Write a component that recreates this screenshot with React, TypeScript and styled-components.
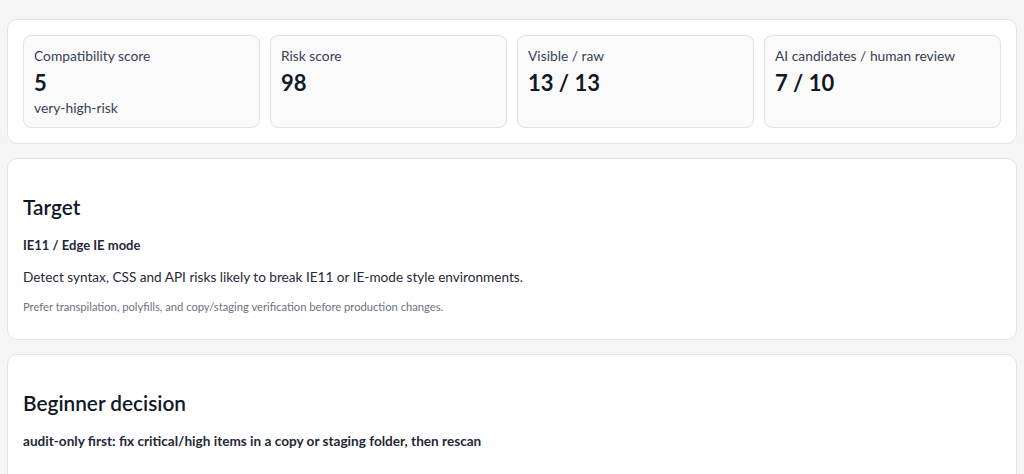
import React from 'react';
import styled, { createGlobalStyle } from 'styled-components';

const GlobalStyle = createGlobalStyle`
  html, body {
    margin: 0;
    padding: 0;
    background: #f5f5f5;
    font-family: Lato, "Noto Sans", sans-serif;
    color: #1f2937;
  }
`;

const Page = styled.div`
  display: flex;
  flex-direction: column;
  gap: 14px;
  padding: 19px 7px 0 7px;
`;

const Card = styled.section`
  background: #ffffff;
  border: 1px solid #e3e3e3;
  border-radius: 10px;
  padding: 15px;
`;

const StatGrid = styled.div`
  display: grid;
  grid-template-columns: repeat(4, 1fr);
  gap: 10px;
`;

const StatBox = styled.div`
  background: #fafafa;
  border: 1px solid #e2e2e2;
  border-radius: 8px;
  padding: 11px 10px 10px;
  display: flex;
  flex-direction: column;
`;

const StatLabel = styled.div`
  font-size: 13.8px;
  line-height: 18px;
  color: #374151;
`;

const StatValue = styled.div`
  margin-top: 4px;
  font-size: 22px;
  line-height: 28px;
  font-weight: 700;
  color: #111827;
`;

const StatSub = styled.div`
  margin-top: 2px;
  font-size: 13.8px;
  line-height: 18px;
  color: #374151;
`;

const Heading = styled.h2`
  margin: 19px 0 0;
  font-size: 20.8px;
  line-height: 28px;
  font-weight: 600;
  color: #111827;
`;

const Strong = styled.div<{ $size?: number }>`
  margin-top: 14px;
  font-size: ${({ $size }) => $size ?? 13}px;
  line-height: 20px;
  font-weight: 700;
  color: #1f2937;
`;

const Text = styled.p`
  margin: 12px 0 0;
  font-size: 13.6px;
  line-height: 20px;
  color: #1f2937;
`;

const Note = styled.p`
  margin: 12px 0 9px;
  font-size: 11.2px;
  line-height: 16px;
  color: #6b7280;
`;

const DecisionBody = styled.div`
  padding-bottom: 40px;
`;

const stats = [
  { label: 'Compatibility score', value: '5', sub: 'very-high-risk' },
  { label: 'Risk score', value: '98' },
  { label: 'Visible / raw', value: '13 / 13' },
  { label: 'AI candidates / human review', value: '7 / 10' },
];

export default function App() {
  return (
    <>
      <GlobalStyle />
      <Page>
        <Card>
          <StatGrid>
            {stats.map((s) => (
              <StatBox key={s.label}>
                <StatLabel>{s.label}</StatLabel>
                <StatValue>{s.value}</StatValue>
                {s.sub && <StatSub>{s.sub}</StatSub>}
              </StatBox>
            ))}
          </StatGrid>
        </Card>
        <Card>
          <Heading>Target</Heading>
          <Strong>IE11 / Edge IE mode</Strong>
          <Text>Detect syntax, CSS and API risks likely to break IE11 or IE-mode style environments.</Text>
          <Note>Prefer transpilation, polyfills, and copy/staging verification before production changes.</Note>
        </Card>
        <Card>
          <Heading>Beginner decision</Heading>
          <DecisionBody>
            <Strong $size={13.6}>audit-only first: fix critical/high items in a copy or staging folder, then rescan</Strong>
          </DecisionBody>
        </Card>
      </Page>
    </>
  );
}
